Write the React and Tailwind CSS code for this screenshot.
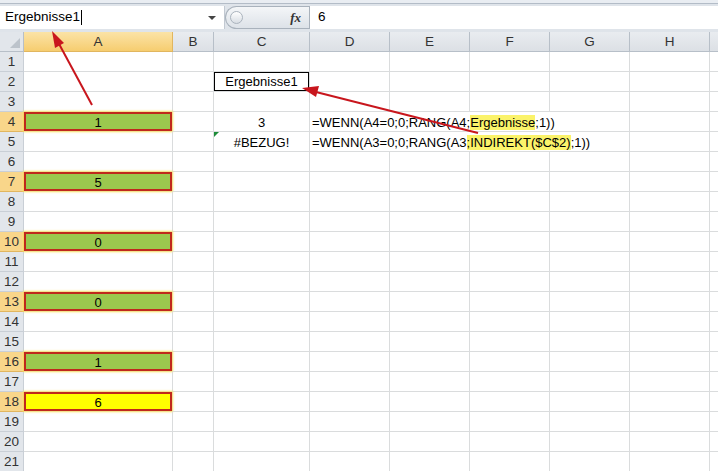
import React from 'react'

const COLS = [
  { k: 'A', w: 'w-[149px]' },
  { k: 'B', w: 'w-[41px]' },
  { k: 'C', w: 'w-[96px]' },
  { k: 'D', w: 'w-[80px]' },
  { k: 'E', w: 'w-[80px]' },
  { k: 'F', w: 'w-[80px]' },
  { k: 'G', w: 'w-[80px]' },
  { k: 'H', w: 'w-[80px]' },
  { k: '', w: 'w-[80px]' },
]

// values shown in column A
const A_VALUES = { 4: '1', 7: '5', 10: '0', 13: '0', 16: '1', 18: '6' }

const ROWS = Array.from({ length: 21 }, (_, i) => i + 1)

function ValueBox({ value, yellow }) {
  return (
    <div
      className={
        'h-full w-full flex items-center justify-center pt-[2px] border-2 border-[#c0281c] shadow-[0_0_2px_1px_#ffe56a] ' +
        (yellow ? 'bg-[#ffff00]' : 'bg-[#9bc84e]')
      }
    >
      {value}
    </div>
  )
}

function Formula({ row }) {
  if (row === 4) {
    return (
      <span>
        =WENN(A4=0;0;RANG(A4;<span className="bg-[#fbf36a]">Ergebnisse</span>;1))
      </span>
    )
  }
  return (
    <span>
      =WENN(A3=0;0;RANG(A3<span className="bg-[#fbf36a]">;INDIREKT($C$2)</span>;1))
    </span>
  )
}

function Row({ n }) {
  const sel = A_VALUES[n] !== undefined
  const formulaRow = n === 4 || n === 5
  return (
    <div className="flex h-[20px]">
      <div
        className={
          'w-[24px] shrink-0 flex items-center justify-center pt-px border-b border-r text-[13.5px] text-[#333] ' +
          (sel ? 'bg-[#f9d68a] border-[#e1b65f]' : 'bg-[#e2e6eb] border-[#c9cfd6]')
        }
      >
        {n}
      </div>
      {/* A */}
      <div className="w-[149px] shrink-0 border-r border-b border-[#dadcdd]">
        {sel && <ValueBox value={A_VALUES[n]} yellow={n === 18} />}
      </div>
      {/* B */}
      <div className="w-[41px] shrink-0 border-r border-b border-[#dadcdd]" />
      {/* C */}
      <div className="w-[96px] shrink-0 border-r border-b border-[#dadcdd] relative">
        {n === 2 && (
          <div className="h-full w-full border border-black flex items-center justify-center pt-px">Ergebnisse1</div>
        )}
        {n === 4 && <div className="h-full flex items-center justify-center pt-[2px]">3</div>}
        {n === 5 && (
          <>
            <div className="absolute left-0 top-0 w-0 h-0 border-t-[5px] border-r-[5px] border-t-[#1e8c3a] border-r-transparent" />
            <div className="h-full flex items-center justify-center pt-[2px]">#BEZUG!</div>
          </>
        )}
      </div>
      {formulaRow ? (
        <div className="w-[320px] shrink-0 border-r border-b border-[#dadcdd] flex items-center pl-[2px] pt-[2px] whitespace-nowrap">
          <Formula row={n} />
        </div>
      ) : (
        <>
          <div className="w-[80px] shrink-0 border-r border-b border-[#dadcdd]" />
          <div className="w-[80px] shrink-0 border-r border-b border-[#dadcdd]" />
          <div className="w-[80px] shrink-0 border-r border-b border-[#dadcdd]" />
          <div className="w-[80px] shrink-0 border-r border-b border-[#dadcdd]" />
        </>
      )}
      <div className="w-[80px] shrink-0 border-r border-b border-[#dadcdd]" />
      <div className="w-[80px] shrink-0 border-r border-b border-[#dadcdd]" />
    </div>
  )
}

export default function App() {
  return (
    <div className="relative w-[718px] h-[471px] overflow-hidden bg-white text-[13px] text-black font-['Liberation_Sans',Arial,sans-serif]">
      {/* ribbon remnant */}
      <div className="h-[4px] bg-[#e9edf2] border-b border-[#b3bcc7]" />

      {/* formula bar */}
      <div className="h-[28px] flex items-start pt-[2px] bg-[#dfe4ea]">
        <div className="w-[225px] h-[23px] bg-white border-r border-[#c2c9d2] flex items-center pl-[5px] text-[13.5px]">
          <span>Ergebnisse1</span>
          <span className="w-px h-[15px] bg-black ml-px" />
          <div className="ml-auto mr-[8px] w-0 h-0 border-l-[4px] border-r-[4px] border-t-[4px] border-l-transparent border-r-transparent border-t-[#444]" />
        </div>
        <div className="w-[84px] h-[23px] rounded-l-full border border-r-0 border-[#a9b2bc] bg-gradient-to-b from-[#f4f6f8] to-[#dde2e8] flex items-center pl-[4px] pr-[8px]">
          <div className="w-[13px] h-[13px] rounded-full border border-[#aab3bd] bg-gradient-to-b from-white to-[#d8dde3]" />
          <span className="ml-auto italic font-bold font-['Liberation_Serif',serif] text-[13px] text-[#333]">fx</span>
        </div>
        <div className="flex-1 h-[23px] bg-white border-l border-[#a9b2bc] flex items-center pl-[8px] text-[13.5px]">6</div>
      </div>

      {/* column headers */}
      <div className="flex h-[20px]">
        <div className="w-[24px] shrink-0 bg-[#e2e6eb] border-r border-b border-[#b7bfc8] relative">
          <svg className="absolute right-[3px] bottom-[3px]" width="10" height="10" viewBox="0 0 10 10">
            <polygon points="10,0 10,10 0,10" fill="#bcc3cb" />
          </svg>
        </div>
        {COLS.map((c, i) => (
          <div
            key={i}
            className={
              c.w +
              ' shrink-0 flex items-center justify-center pt-px border-r border-b text-[13.5px] text-[#333] ' +
              (c.k === 'A'
                ? 'bg-gradient-to-b from-[#fbe3a6] to-[#f6cd6f] border-[#e1b65f]'
                : 'bg-gradient-to-b from-[#e9ecf0] to-[#dce0e5] border-[#b7bfc8]')
            }
          >
            {c.k}
          </div>
        ))}
      </div>

      {ROWS.map(n => (
        <Row key={n} n={n} />
      ))}

      {/* arrows */}
      <svg className="absolute left-0 top-0 pointer-events-none" width="718" height="471">
        <g fill="#c8161d" stroke="#c8161d">
          <line x1="92" y1="105" x2="58" y2="42" strokeWidth="2" />
          <polygon points="52,31 64,43 55,48" stroke="none" />
          <line x1="478" y1="133" x2="312" y2="91" strokeWidth="2" />
          <polygon points="302,88 319,86 316,97" stroke="none" />
        </g>
      </svg>
    </div>
  )
}
